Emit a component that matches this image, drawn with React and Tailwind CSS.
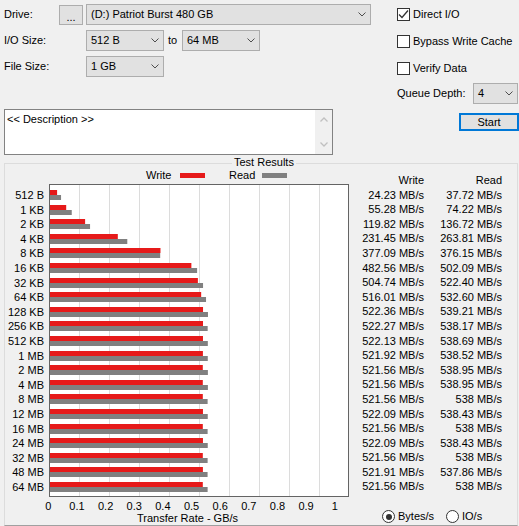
import React from "react";

const rows = [
  ["512 B", "24.23", "37.72"],
  ["1 KB", "55.28", "74.22"],
  ["2 KB", "119.82", "136.72"],
  ["4 KB", "231.45", "263.81"],
  ["8 KB", "377.09", "376.15"],
  ["16 KB", "482.56", "502.09"],
  ["32 KB", "504.74", "522.40"],
  ["64 KB", "516.01", "532.60"],
  ["128 KB", "522.36", "539.21"],
  ["256 KB", "522.27", "538.17"],
  ["512 KB", "522.13", "538.69"],
  ["1 MB", "521.92", "538.52"],
  ["2 MB", "521.56", "538.95"],
  ["4 MB", "521.56", "538.95"],
  ["8 MB", "521.56", "538"],
  ["12 MB", "522.09", "538.43"],
  ["16 MB", "521.56", "538"],
  ["24 MB", "522.09", "538.43"],
  ["32 MB", "521.56", "538"],
  ["48 MB", "521.91", "537.86"],
  ["64 MB", "521.56", "538"],
];

const ticks = ["0", "0.1", "0.2", "0.3", "0.4", "0.5", "0.6", "0.7", "0.8", "0.9", "1"];

const Chevron = () => (
  <svg width="8" height="5" viewBox="0 0 8 5" className="shrink-0">
    <polyline points="0.5,0.5 4,4 7.5,0.5" fill="none" stroke="#4d4d4d" strokeWidth="1" />
  </svg>
);

const Combo = ({ value, className }) => (
  <div className={`flex h-[21px] items-center justify-between border border-[#adadad] bg-[#e1e1e1] pl-[4px] pr-[4px] ${className}`}>
    <span>{value}</span>
    <Chevron />
  </div>
);

const Check = ({ label, checked }) => (
  <div className="flex h-[21px] items-center">
    <div className="flex h-[13px] w-[13px] items-center justify-center border border-[#333333] bg-white">
      {checked && (
        <svg width="11" height="11" viewBox="0 0 11 11">
          <polyline points="1,5.5 4,8.5 10,1.5" fill="none" stroke="#333333" strokeWidth="1.3" />
        </svg>
      )}
    </div>
    <span className="ml-[3px]">{label}</span>
  </div>
);

const Radio = ({ checked }) => (
  <div className="flex h-[13px] w-[13px] items-center justify-center rounded-full border border-[#333333] bg-white">
    {checked && <div className="h-[6px] w-[6px] rounded-full bg-[#333333]" />}
  </div>
);

const Chart = () => (
  <svg width="300" height="313" className="block shrink-0">
    <rect x="0.5" y="0.5" width="299" height="312" fill="#ffffff" stroke="#646464" />
    {[1, 2, 3, 4, 5, 6, 7, 8, 9].map((k) => (
      <line key={k} x1={30 * k + 0.5} y1="1" x2={30 * k + 0.5} y2="312" stroke="#dcdcdc" />
    ))}
    {rows.map((r, i) => {
      const y = Math.round(6 + 14.6 * i);
      const w = (parseFloat(r[1]) / 1024) * 300;
      const rd = (parseFloat(r[2]) / 1024) * 300;
      return (
        <g key={r[0]}>
          <rect x="1" y={y} width={w} height="5" fill="#e61a1a" />
          <rect x="1" y={y + 5} width={rd} height="5" fill="#808080" />
        </g>
      );
    })}
  </svg>
);

export default function App() {
  return (
    <div className="h-[526px] w-[519px] overflow-hidden bg-[#f0f0f0] pl-[4px] pt-[4px] text-[11px] leading-[13px] text-black font-['Liberation_Sans',Arial,sans-serif]">
      <div className="flex">
        {/* left controls */}
        <div className="flex w-[367px] flex-col">
          <div className="flex h-[21px] items-center">
            <span className="w-[55px]">Drive:</span>
            <div className="flex h-[20px] w-[24px] items-end justify-center border border-[#adadad] bg-[#e1e1e1] pb-[3px] leading-[8px]">...</div>
            <Combo value="(D:) Patriot Burst 480 GB" className="ml-[3px] w-[285px]" />
          </div>
          <div className="mt-[5px] flex h-[21px] items-center">
            <span className="w-[82px]">I/O Size:</span>
            <Combo value="512 B" className="w-[78px]" />
            <span className="w-[18px] pl-[4px]">to</span>
            <Combo value="64 MB" className="w-[78px]" />
          </div>
          <div className="mt-[5px] flex h-[21px] items-center">
            <span className="w-[82px]">File Size:</span>
            <Combo value="1 GB" className="w-[78px]" />
          </div>
          <div className="mt-[32px] flex h-[46px] w-[329px] border border-[#828282] bg-white">
            <div className="flex-1 pl-[2px] pt-[3px]">&lt;&lt; Description &gt;&gt;</div>
            <div className="flex w-[17px] flex-col items-center justify-between bg-[#f0f0f0] py-[7px]">
              <svg width="8" height="5" viewBox="0 0 8 5">
                <polyline points="0.5,4.5 4,1 7.5,4.5" fill="none" stroke="#c0c0c0" strokeWidth="1.3" />
              </svg>
              <svg width="8" height="5" viewBox="0 0 8 5">
                <polyline points="0.5,0.5 4,4 7.5,0.5" fill="none" stroke="#c0c0c0" strokeWidth="1.3" />
              </svg>
            </div>
          </div>
        </div>

        {/* right options */}
        <div className="ml-[26px] flex w-[122px] flex-col">
          <Check label="Direct I/O" checked />
          <div className="mt-[6px]">
            <Check label="Bypass Write Cache" />
          </div>
          <div className="mt-[6px]">
            <Check label="Verify Data" />
          </div>
          <div className="mt-[4px] flex h-[21px] items-center justify-between">
            <span>Queue Depth:</span>
            <Combo value="4" className="mr-[1px] w-[45px]" />
          </div>
          <div className="mt-[9px] flex h-[18px] w-[60px] items-center justify-center self-end border-2 border-[#0078d7] bg-[#e1e1e1]">
            Start
          </div>
        </div>
      </div>

      {/* results group */}
      <div className="relative mt-[8px] flex h-[363px] w-[514px] border border-[#dcdcdc] border-b-[#a0a0a0]">
        <span className="absolute -top-[8px] left-[227px] bg-[#f0f0f0] px-[2px]">Test Results</span>

        <div className="flex w-[344px] flex-col">
          <div className="flex h-[20px] items-center pl-[141px] pt-[3px]">
            <span className="w-[34px]">Write</span>
            <span className="h-[5px] w-[25px] bg-[#e61a1a]" />
            <span className="w-[24px]" />
            <span className="w-[33px]">Read</span>
            <span className="h-[5px] w-[25px] bg-[#808080]" />
          </div>
          <div className="flex">
            <div className="flex w-[40px] flex-col pt-[4px] pr-[1px] text-right">
              {rows.map((r) => (
                <div key={r[0]} className="h-[14.6px] leading-[14.6px]">{r[0]}</div>
              ))}
            </div>
            <div className="ml-[4px]">
              <Chart />
            </div>
          </div>
          <div className="ml-[29px] mt-[3px] flex h-[13px]">
            {ticks.map((t) => (
              <span key={t} className="w-[30px] text-center">{t}</span>
            ))}
          </div>
          <div className="-mt-[1px] ml-[132px] h-[13px]">Transfer Rate - GB/s</div>
        </div>

        <div className="flex flex-1 flex-col pt-[9px]">
          <div className="flex">
            <div className="w-[75px] text-right">
              <div className="h-[14.6px] leading-[14.6px]">Write</div>
              {rows.map((r) => (
                <div key={r[0]} className="h-[14.6px] leading-[14.6px]">{r[1]} MB/s</div>
              ))}
            </div>
            <div className="w-[78px] text-right">
              <div className="h-[14.6px] leading-[14.6px]">Read</div>
              {rows.map((r) => (
                <div key={r[0]} className="h-[14.6px] leading-[14.6px]">{r[2]} MB/s</div>
              ))}
            </div>
          </div>
          <div className="mb-[2px] mt-auto flex h-[13px] items-center pl-[33px]">
            <Radio checked />
            <span className="ml-[3px] w-[48px]">Bytes/s</span>
            <Radio />
            <span className="ml-[3px]">IO/s</span>
          </div>
        </div>
      </div>
    </div>
  );
}
